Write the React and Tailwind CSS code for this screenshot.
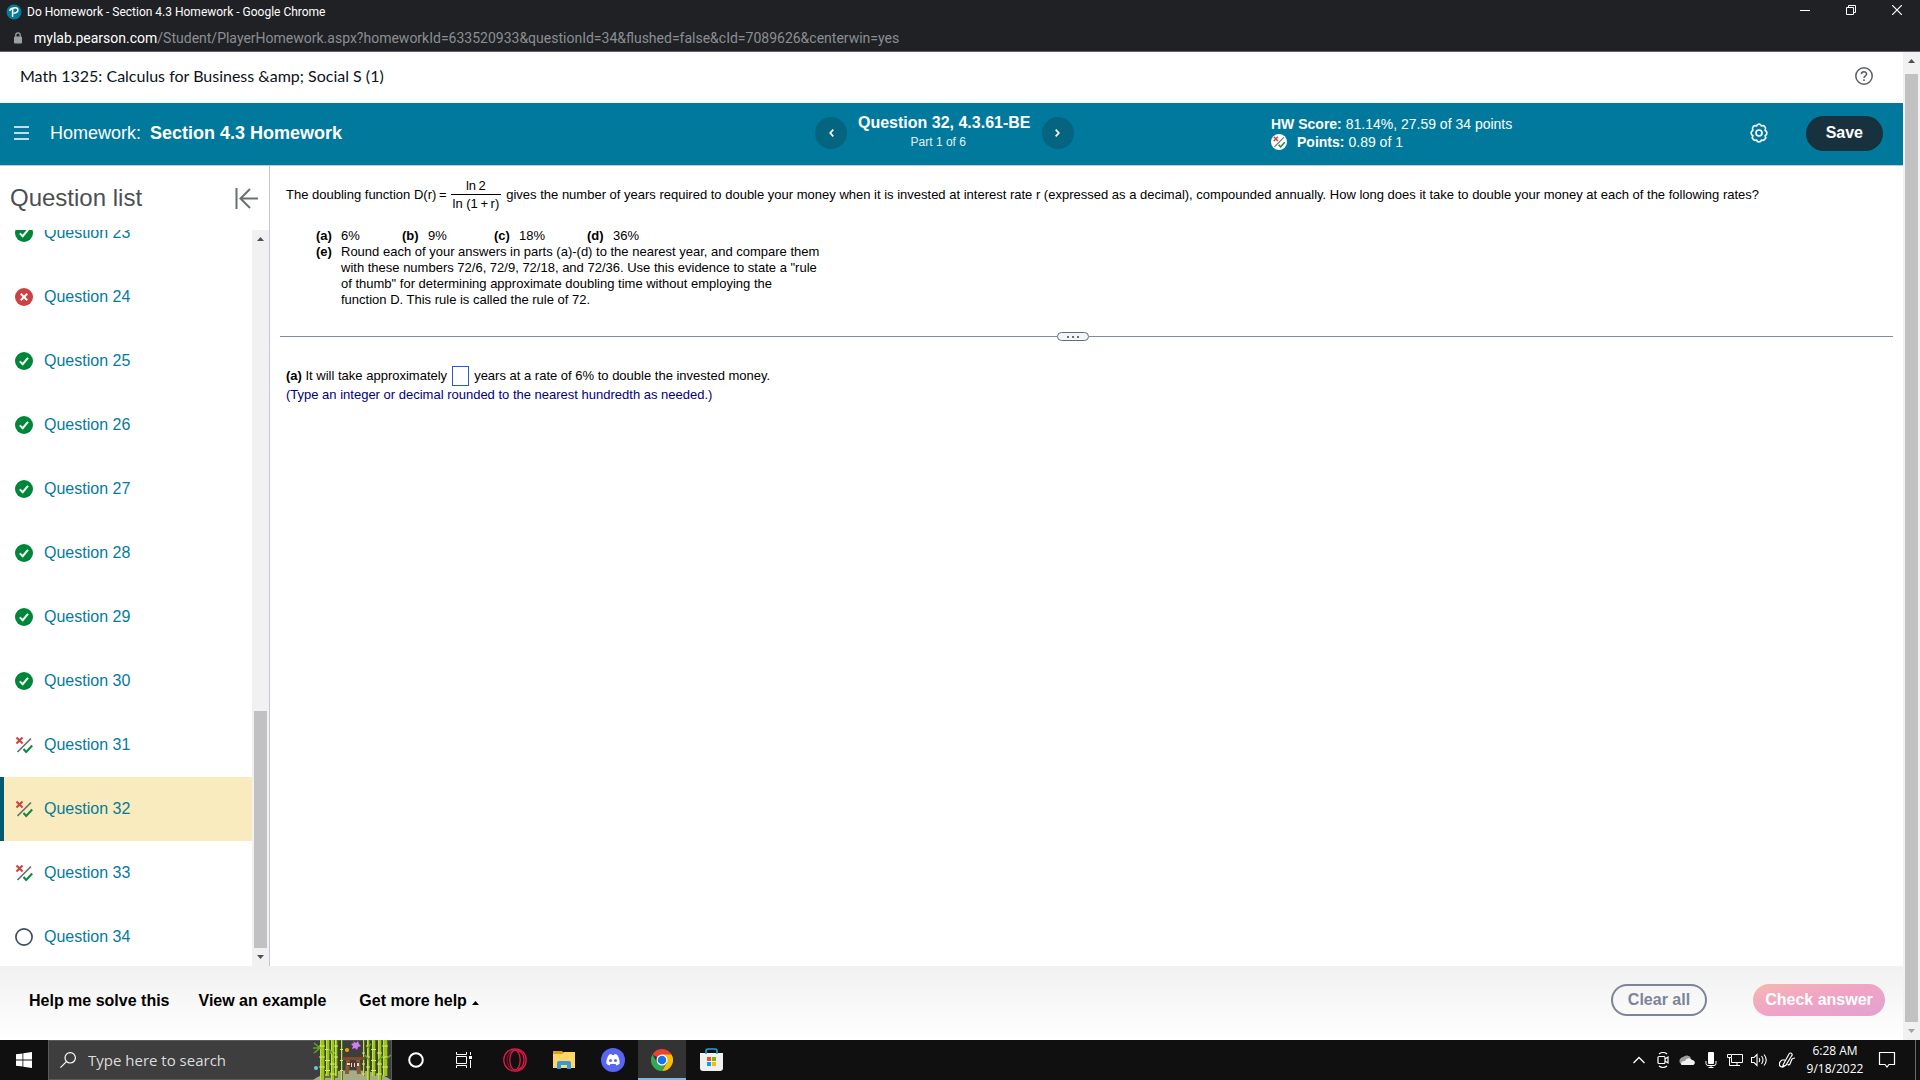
// src/App.jsx
import React, { useState } from 'react';

const questions = [
  { id: 23, status: 'correct' },
  { id: 24, status: 'wrong' },
  { id: 25, status: 'correct' },
  { id: 26, status: 'correct' },
  { id: 27, status: 'correct' },
  { id: 28, status: 'correct' },
  { id: 29, status: 'correct' },
  { id: 30, status: 'correct' },
  { id: 31, status: 'partial' },
  { id: 32, status: 'partial' },
  { id: 33, status: 'partial' },
  { id: 34, status: 'empty' },
];

function StatusIcon({ status }) {
  if (status === 'correct') {
    return (
      <svg className="size-[18px]" viewBox="0 0 18 18" fill="none">
        <circle cx="9" cy="9" r="9" fill="#008638" />
        <path d="M4.8 9.4l2.9 2.8 5.3-6.4" stroke="#fff" strokeWidth="2" />
      </svg>
    );
  }
  if (status === 'wrong') {
    return (
      <svg className="size-[18px]" viewBox="0 0 18 18" fill="none">
        <circle cx="9" cy="9" r="9" fill="#cc4142" />
        <path d="M5.8 5.8l6.4 6.4M12.2 5.8l-6.4 6.4" stroke="#fff" strokeWidth="2" />
      </svg>
    );
  }
  if (status === 'partial') {
    return (
      <svg className="size-[18px]" viewBox="0 0 18 18" fill="none">
        <path d="M1.5 1.5l6 6M7.5 1.5l-6 6" stroke="#cc4142" strokeWidth="2" />
        <path d="M2.5 16L16 2.5" stroke="#6a7070" strokeWidth="1.7" />
        <path d="M8.5 13l2.7 3 6-6.5" stroke="#12893f" strokeWidth="2.1" />
      </svg>
    );
  }
  return (
    <svg className="size-[18px]" viewBox="0 0 18 18" fill="none">
      <circle cx="9" cy="9" r="8.1" stroke="#3d4d61" strokeWidth="1.7" />
    </svg>
  );
}

function Arrow({ up, className }) {
  return (
    <svg className={className} viewBox="0 0 7 4" fill="currentColor">
      <path d={up ? 'M0 4L3.5 0 7 4z' : 'M0 0h7L3.5 4z'} />
    </svg>
  );
}

/* ---------- Browser window ---------- */

function TitleBar() {
  return (
    <div className="bg-[#202124] text-white font-['Roboto','Noto_Sans',sans-serif]">
      <div className="flex h-6 items-center pl-[6px] text-xs">
        <svg className="size-4" viewBox="0 0 16 16" fill="none">
          <circle cx="8" cy="8" r="7.5" fill="#047a9c" />
          <path d="M6.6 13V4.3c3.5-1.3 5.4-.2 5.3 1.8-.1 2-2 3.2-4.3 2.9M3.6 6.8c.2-1.3 1.3-2.3 3-2.8" stroke="#fff" strokeWidth="1.5" />
        </svg>
        <span className="ml-[5px]">Do Homework - Section 4.3 Homework - Google Chrome</span>
        <div className="ml-auto flex">
          <button aria-label="Minimize" className="flex h-6 w-[46px] items-center justify-center">
            <svg className="size-[10px]" viewBox="0 0 10 10" stroke="#fff"><path d="M0 3.5h10" /></svg>
          </button>
          <button aria-label="Restore" className="flex h-6 w-[46px] items-center justify-center pb-1">
            <svg className="size-[10px]" viewBox="0 0 10 10" stroke="#fff" fill="none">
              <path d="M.5 2.5h7v7h-7zM2.5 2.5v-2h7v7h-2" />
            </svg>
          </button>
          <button aria-label="Close" className="flex h-6 w-[46px] items-center justify-center pb-1">
            <svg className="size-[10px]" viewBox="0 0 10 10" stroke="#fff" strokeWidth="1.2"><path d="M0 0l10 10M10 0L0 10" /></svg>
          </button>
        </div>
      </div>
      <div className="flex h-7 items-center border-b border-[#5f6368] pl-[14px] text-sm">
        <svg className="h-3 w-2" viewBox="0 0 8 12" fill="none">
          <path d="M1.8 5V3a2.2 2.2 0 0 1 4.4 0v2" stroke="#9aa0a6" strokeWidth="1.3" />
          <rect y="4.5" width="8" height="7" rx="1" fill="#9aa0a6" />
        </svg>
        <span className="ml-3 whitespace-nowrap text-[#8b8f94]">
          <span className="text-white">mylab.pearson.com</span>
          /Student/PlayerHomework.aspx?homeworkId=633520933&amp;questionId=34&amp;flushed=false&amp;cId=7089626&amp;centerwin=yes
        </span>
      </div>
    </div>
  );
}

function CourseHeader() {
  return (
    <div className="flex h-[51px] items-center justify-between bg-white pr-[30px] pb-[3px] pl-5">
      <span className="font-['Lato','Inter',sans-serif] text-base text-[#0b1220]">
        Math 1325: Calculus for Business {'&amp;'} Social S (1)
      </span>
      <button aria-label="Help">
        <svg className="size-[18px]" viewBox="0 0 18 18" fill="none" stroke="#5a5f61" strokeWidth="1.5">
          <circle cx="9" cy="9" r="8.2" />
          <path d="M6.4 7.2c0-3.2 5.2-3.1 5.2-.2 0 1.9-2.6 1.7-2.6 4M9 12.2v1.7" />
        </svg>
      </button>
    </div>
  );
}

function HomeworkHeader() {
  return (
    <header className="grid h-[63px] grid-cols-[815fr_456fr_632fr] items-center border-b border-[#c7c7d3] bg-[#00799c] pb-[2px] text-white">
      <div className="flex items-center pl-[14px]">
        <button aria-label="Menu">
          <svg className="h-[14px] w-[15px]" viewBox="0 0 15 14" stroke="#fff" strokeWidth="1.4">
            <path d="M0 1h15M0 7h15M0 13h15" />
          </svg>
        </button>
        <h1 className="ml-[21px] text-lg">
          Homework: <b className="ml-1">Section 4.3 Homework</b>
        </h1>
      </div>

      <div className="flex items-center">
        <button aria-label="Previous question" className="flex size-8 items-center justify-center rounded-full bg-[#05647f]">
          <svg className="h-2 w-[5px]" viewBox="0 0 5 8" fill="none" stroke="#fff" strokeWidth="1.7"><path d="M4.3.7L1.2 4l3.1 3.3" /></svg>
        </button>
        <div className="mx-[11px] pb-[2px] text-center">
          <h2 className="text-base leading-5 font-bold">Question 32, 4.3.61-BE</h2>
          <p className="pr-3 text-xs leading-[18px] text-[#e3f0f4]">Part 1 of 6</p>
        </div>
        <button aria-label="Next question" className="flex size-8 items-center justify-center rounded-full bg-[#05647f]">
          <svg className="h-2 w-[5px]" viewBox="0 0 5 8" fill="none" stroke="#fff" strokeWidth="1.7"><path d="M.7.7L3.8 4 .7 7.3" /></svg>
        </button>
      </div>

      <div className="flex items-center pr-5">
        <div className="text-sm leading-[18px]">
          <p><b>HW Score:</b> 81.14%, 27.59 of 34 points</p>
          <p className="flex items-center">
            <span className="mr-[10px] flex size-4 items-center justify-center rounded-full bg-white">
              <span className="scale-70"><StatusIcon status="partial" /></span>
            </span>
            <b className="mr-1">Points:</b> 0.89 of 1
          </p>
        </div>
        <button aria-label="Settings" className="ml-auto">
          <svg className="size-5" viewBox="0 0 18 18" fill="none" stroke="#fff" strokeWidth="1.5" strokeLinejoin="round">
            <path d="M9 1c1.3 0 1.9.5 2.2 1.7 1.2-.5 2.3-.3 3.1.7.9 1 .9 2.1.2 3.1 1.1.6 1.600 1.400 1.600 2.500s-.5 1.900-1.600 2.500c.7 1 .7 2.100-.2 3.100-.8 1-1.900 1.200-3.100.7C10.900 16.500 10.300 17 9 17s-1.900-.5-2.200-1.700c-1.200.5-2.300.3-3.100-.7-.9-1-.9-2.100-.2-3.100C2.400 10.900 1.900 10.100 1.900 9s.5-1.900 1.600-2.500c-.7-1-.7-2.100.2-3.100.8-1 1.900-1.200 3.100-.7C7.100 1.500 7.700 1 9 1z" />
            <circle cx="9" cy="9" r="2.7" />
          </svg>
        </button>
        <button className="ml-[37px] h-[35px] rounded-full bg-[#17313f] px-5 text-base font-bold">Save</button>
      </div>
    </header>
  );
}

/* ---------- Question list ---------- */

function QuestionList({ current, onSelect }) {
  return (
    <aside className="flex w-[270px] shrink-0 flex-col border-r border-[#c7c7d3]">
      <div className="flex h-16 shrink-0 items-center justify-between pr-[11px] pl-[10px]">
        <h2 className="text-2xl text-[#4b4f52]">Question list</h2>
        <button aria-label="Collapse question list">
          <svg className="h-[21px] w-[23px]" viewBox="0 0 23 21" fill="none" stroke="#6a7070" strokeWidth="2">
            <path d="M1.5 0v21M6 10.5h17M15 1L5.5 10.5 15 20" />
          </svg>
        </button>
      </div>
      <div className="flex min-h-0 flex-1">
        <div className="flex-1 overflow-hidden">
          <ul className="-mt-[29px]">
            {questions.map((q) => (
              <li key={q.id}>
                <a
                  href={`#q${q.id}`}
                  onClick={() => onSelect(q.id)}
                  className={`flex h-16 items-center gap-[11px] border-l-4 pl-[11px] text-base text-[#047a9c] ${q.id === current ? 'border-[#005a70] bg-[#f9ebbd]' : 'border-transparent'}`}
                >
                  <StatusIcon status={q.status} />
                  Question {q.id}
                </a>
              </li>
            ))}
          </ul>
        </div>
        <div className="flex w-[17px] flex-col items-center bg-[#f1f1f1] py-[7px] text-[#505050]">
          <Arrow up className="h-1 w-[7px]" />
          <div className="flex-1" />
          <div className="h-[237px] w-[13px] bg-[#c1c1c1]" />
          <Arrow className="mt-[7px] h-1 w-[7px]" />
        </div>
      </div>
    </aside>
  );
}

/* ---------- Question body ---------- */

function QuestionBody() {
  const [answer, setAnswer] = useState('');

  return (
    <main className="min-w-0 flex-1 px-[10px] text-[13px] leading-4 text-black">
      <div className="flex items-center pt-3 pl-[6px] whitespace-nowrap">
        <span>The doubling function D(r)&thinsp;=</span>
        <span className="mr-[5px] ml-1 inline-flex flex-col text-center">
          <span className="border-b border-black px-[2px]">ln&thinsp;2</span>
          <span className="px-[2px] pt-px">ln (1&thinsp;+&thinsp;r)</span>
        </span>
        <span>
          gives the number of years required to double your money when it is invested at interest rate r (expressed as a decimal), compounded annually. How long does it take to double your money at each of the following rates?
        </span>
      </div>

      <div className="mt-4 pl-9">
        <div className="grid grid-cols-[25px_61px_26px_66px_25px_68px_26px_auto]">
          <b>(a)</b><span>6%</span>
          <b>(b)</b><span>9%</span>
          <b>(c)</b><span>18%</span>
          <b>(d)</b><span>36%</span>
        </div>
        <div className="flex">
          <b className="w-[25px]">(e)</b>
          <p>
            Round each of your answers in parts (a)-(d) to the nearest year, and compare them<br />
            with these numbers 72/6, 72/9, 72/18, and 72/36. Use this evidence to state a "rule<br />
            of thumb" for determining approximate doubling time without employing the<br />
            function D. This rule is called the rule of 72.
          </p>
        </div>
      </div>

      <div className="mt-6 flex items-center">
        <div className="h-px flex-[29] bg-[#8088a3]" />
        <button aria-label="Resize panels" className="flex h-[9px] w-8 items-center justify-center gap-[3px] rounded-full border border-[#5b6f8a] bg-[#f5f5f5]">
          <i className="size-[2px] bg-[#6a7070]" />
          <i className="size-[2px] bg-[#6a7070]" />
          <i className="size-[2px] bg-[#6a7070]" />
        </button>
        <div className="h-px flex-[30] bg-[#8088a3]" />
      </div>

      <div className="mt-[25px] pl-[6px]">
        <label className="flex items-center">
          <span><b>(a)</b> It will take approximately</span>
          <input
            type="text"
            className="mx-[5px] h-5 w-[17px] border border-[#2a5bd0] bg-white outline-none"
            value={answer}
            onChange={(e) => setAnswer(e.target.value)}
          />
          <span>years at a rate of 6% to double the invested money.</span>
        </label>
        <p className="mt-px text-[#000080]">(Type an integer or decimal rounded to the nearest hundredth as needed.)</p>
      </div>
    </main>
  );
}

function HelpBar() {
  return (
    <footer className="flex h-[74px] shrink-0 items-center bg-linear-to-b from-[#f1f1f1] to-white pr-[18px] pb-[6px] pl-[29px] text-base font-bold text-black">
      <button className="pt-px">Help me solve this</button>
      <button className="ml-[29px] pt-px">View an example</button>
      <button className="ml-[33px] flex items-center gap-[5px] pt-px">
        Get more help <Arrow up className="mt-1 h-1 w-[7px]" />
      </button>
      <button className="ml-auto h-8 w-24 rounded-full border-2 border-[#7d8499] text-[#7d8499]">Clear all</button>
      <button className="ml-[46px] h-8 w-33 rounded-full bg-linear-to-br from-[#f5b8b0] via-[#efa3c6] to-[#e3a2d0] text-white">Check answer</button>
    </footer>
  );
}

/* ---------- Windows taskbar ---------- */

const stalks = [
  { x: 7, w: 4 }, { x: 13, w: 3 }, { x: 18, w: 3 }, { x: 22, w: 2 }, { x: 28, w: 1 },
  { x: 50, w: 1 }, { x: 54, w: 2 }, { x: 59, w: 3 }, { x: 65, w: 3 }, { x: 70, w: 4 },
];

function Bamboo() {
  return (
    <svg className="h-10 w-[78px]" viewBox="0 0 78 40">
      <path d="M0 40c16-13 62-13 78 0z" fill="#a5ac86" />
      <path d="M12 36c4-4 10-5 13-4v6H12z" fill="#26331c" opacity=".5" />
      {stalks.map((s, i) => (
        <g key={s.x}>
          <rect x={s.x + 1} width={s.w} height={i % 2 ? 36 : 40} fill="#4d7a17" />
          <rect x={s.x} width={s.w} height={i % 2 ? 36 : 40} fill="#9cc41c" />
          <rect x={s.x} width="1" height={i % 2 ? 36 : 40} fill="#c6df3c" />
          <path d={`M${s.x - 1} ${6 + (i % 3) * 3.5}h${s.w + 2}m-${s.w + 2} 11h${s.w + 2}m-${s.w + 2} 10h${s.w + 2}`} stroke="#dde77a" />
        </g>
      ))}
      <path d="M1 3l6 5-6 5M0 8h7M78 15l-5 4M16 9l4 5M52 15l4 5M58 4l-4 4M65 21l5-5" stroke="#62a51c" strokeWidth="1.5" fill="none" />
      <path d="M29 17h23l-1 3H30z" fill="#7b4b2d" />
      <path d="M33 20l-1 14h4l1-14zM43 20l1 14h4l-1-14z" fill="#8b5936" />
      <path d="M35 22h11v4H35z" fill="#5b3825" />
      <path d="M34 23h3v2h-3zm4 0h1v4h-1zm3 0h1v4h-1zm3 0h2v3h-2z" fill="#ead9bb" />
      <circle cx="34" cy="10" r="2" fill="#f7a600" />
      <circle cx="3" cy="28" r="2" fill="#65cbed" />
      <path d="M40 1l3 2 2-2 1 3 2 2-3 1-1 3-2-2-3 1 1-3-2-2 3-1z" fill="#d77cf5" />
    </svg>
  );
}

function AppButton({ label, active, children }) {
  return (
    <button
      aria-label={label}
      className={`flex h-10 w-12 items-center justify-center ${active ? 'border-b-2 border-[#76b9ed] bg-[#333333] pt-[2px]' : ''}`}
    >
      {children}
    </button>
  );
}

function Taskbar() {
  return (
    <div className="flex h-10 shrink-0 items-center bg-[#101010] text-white font-['Open_Sans','Noto_Sans',sans-serif]">
      <AppButton label="Start">
        <svg className="size-4" viewBox="0 0 16 16" fill="#fff">
          <path d="M0 2.3L6.5 1.4v6.2H0zM7.3 1.3L16 0v7.6H7.3zM0 8.4h6.5v6.2L0 13.7zM7.3 8.4H16V16l-8.7-1.3z" />
        </svg>
      </AppButton>
      <div className="flex h-10 w-[344px] items-center border border-[#5a5a5a] bg-[#3e3e3e] pl-[11px]">
        <svg className="size-4 shrink-0" viewBox="0 0 16 16" fill="none" stroke="#fff" strokeWidth="1.2">
          <circle cx="10.2" cy="5.8" r="5.2" /><path d="M6.4 9.6L.4 15.6" />
        </svg>
        <input
          type="text"
          aria-label="Type here to search"
          placeholder="Type here to search"
          className="ml-3 min-w-0 flex-1 bg-transparent text-[15px] outline-none placeholder:text-[#dcdcdc]"
        />
        <Bamboo />
      </div>
      <AppButton label="Cortana">
        <svg className="size-4" viewBox="0 0 16 16" fill="none"><circle cx="8" cy="8" r="6.8" stroke="#fff" strokeWidth="2" /></svg>
      </AppButton>
      <AppButton label="Task view">
        <svg className="size-4" viewBox="0 0 16 16" fill="none" stroke="#fff">
          <path d="M.5 0v2.5h10V0M.5 16v-2.5h10V16M.5 4.5h10v7H.5zM14.5 0v3M14.5 8v8" />
          <path d="M13 4h3v3h-3z" fill="#fff" stroke="none" />
        </svg>
      </AppButton>
      <div className="ml-[3px] flex gap-px">
        <AppButton label="Opera GX">
          <svg className="size-6" viewBox="0 0 24 24" fill="none" stroke="#e3194b" strokeWidth="1.3">
            <circle cx="12" cy="12" r="11.2" />
            <ellipse cx="12" cy="12" rx="5.2" ry="10" />
            <path d="M15 2.3c8 3.5 8 16 0 19.4" />
            <path d="M9 2.3c-3 3.5-5 5-5 9.7s2 6.5 5 9.7" opacity=".5" />
          </svg>
        </AppButton>
        <AppButton label="File Explorer">
          <svg className="h-[18px] w-[22px]" viewBox="0 0 22 18">
            <path d="M0 0h9l2 2h10v4H0z" fill="#e3a008" />
            <path d="M0 3h9l2-2h11v16H0z" fill="#ffd766" />
            <path d="M4 18v-6q0-2 2-2h10q2 0 2 2v6h-4v-4H8v4z" fill="#3a96dd" />
          </svg>
        </AppButton>
        <AppButton label="Discord">
          <svg className="size-6" viewBox="0 0 24 24">
            <circle cx="12" cy="12" r="12" fill="#5865f2" />
            <path d="M8 6.8c1-.5 2-.7 2.500-.7l.4.8h2.200l.4-.8c.7 0 1.700.3 2.600.7 1.900 2.700 2.700 5.500 2.500 9-1 .8-2 1.300-3.200 1.600l-.8-1.300H9.400l-.8 1.300c-1.200-.3-2.200-.8-3.200-1.600-.2-3.400.6-6.300 2.600-9z" fill="#fff" />
            <circle cx="9.5" cy="12.5" r="1.5" fill="#5865f2" />
            <circle cx="14.5" cy="12.5" r="1.5" fill="#5865f2" />
          </svg>
        </AppButton>
        <AppButton label="Google Chrome" active>
          <svg className="size-[22px]" viewBox="0 0 22 22">
            <path d="M11 11L1.47 5.5A11 11 0 0 1 20.53 5.5z" fill="#ea4335" />
            <path d="M11 5.5h9.53A11 11 0 0 1 11 22l4.76-8.25z" fill="#fbbc04" />
            <path d="M15.76 13.75L11 22A11 11 0 0 1 1.47 5.5l4.77 8.25z" fill="#34a853" />
            <circle cx="11" cy="11" r="5.5" fill="#fff" />
            <circle cx="11" cy="11" r="4.3" fill="#1a73e8" />
          </svg>
        </AppButton>
        <AppButton label="Microsoft Store">
          <svg className="h-6 w-[23px]" viewBox="0 0 23 24" fill="none">
            <path d="M0 5h23v15q0 3-3 3H3q-3 0-3-3z" fill="#f0f0f0" />
            <path d="M6 6V3q0-2 2-2h7q2 0 2 2v3" stroke="#1fa3e0" strokeWidth="1.6" />
            <path d="M7 9h4v4H7z" fill="#f25022" /><path d="M12 9h4v4h-4z" fill="#7fba00" />
            <path d="M7 14h4v4H7z" fill="#00a4ef" /><path d="M12 14h4v4h-4z" fill="#ffb900" />
          </svg>
        </AppButton>
      </div>

      <div className="ml-auto flex items-center gap-2">
        <svg className="size-4" viewBox="0 0 16 16" fill="none" stroke="#fff" strokeWidth="1.3"><path d="M2.5 11L8 5.5l5.5 5.5" /></svg>
        <svg className="size-4" viewBox="0 0 16 16" fill="none" stroke="#fff" strokeWidth="1.2">
          <rect x="3" y="4.5" width="7" height="7" rx="1" /><path d="M10 7l3-2v6l-3-2M4 2q4-3 8 0M4 14q4 3 8 0" />
        </svg>
        <svg className="size-4" viewBox="0 0 16 16">
          <path d="M1 11a4 4 0 0 1 3-6 5 5 0 0 1 8 1l-8 7H3z" fill="#9c9c9c" />
          <path d="M2 12.5C2 9 5 9 6 9c1-3 5-4 7-1 3 0 4 4 1 5H3z" fill="#f2f2f2" />
        </svg>
        <svg className="size-4" viewBox="0 0 16 16" fill="none" stroke="#fff">
          <rect x="5" width="6" height="12" rx="1" fill="#fff" stroke="none" />
          <path d="M3 9v2.5q0 2 2 2h6q2 0 2-2V9M8 13.5V16M5.5 15.5h5" />
        </svg>
        <svg className="size-4" viewBox="0 0 16 16" fill="none" stroke="#fff">
          <path d="M5 2.5h10.500v8H4.500V6M10 10.500v3M6 13.500h7M.5 2.500h4v3h-4zM2.500 5.500v8H6" />
        </svg>
        <svg className="size-4" viewBox="0 0 16 16" fill="none" stroke="#fff" strokeWidth="1.1">
          <path d="M.5 5.5H3l3-3v11l-3-3H.5zM8 6q1.500 2 0 4M10.500 4q3 4 0 8M13 2.500q4.500 5.500 0 11" />
        </svg>
        <svg className="ml-1 size-4" viewBox="0 0 16 16" fill="none" stroke="#fff" strokeWidth="1.2">
          <path d="M4 13L10 2q1.500-2 3 0 .5 1-.5 2L7 13l-3 2zM6 8H3q-4 3-2 6 2 2 4-1M9 12q0 2 2 0l2-5q2-1 3-1" />
        </svg>
        <div className="ml-[2px] w-[60px] text-center text-xs leading-[18px]">
          <div>6:28 AM</div>
          <div>9/18/2022</div>
        </div>
        <button aria-label="Notifications" className="mr-[11px] ml-[5px]">
          <svg className="size-[18px]" viewBox="0 0 18 18" fill="none" stroke="#fff" strokeWidth="1.2">
            <path d="M1.500 1.500h15v12H11L9 16l-2-2.500H1.500z" />
          </svg>
        </button>
        <div className="mr-1 h-10 w-px bg-[#6a6a6a]" />
      </div>
    </div>
  );
}

export default function App() {
  const [current, setCurrent] = useState(32);

  return (
    <div className="flex h-screen flex-col overflow-hidden bg-white font-['Liberation_Sans',Arial,sans-serif]">
      <TitleBar />
      <div className="flex min-h-0 flex-1">
        <div className="flex min-w-0 flex-1 flex-col">
          <CourseHeader />
          <HomeworkHeader />
          <div className="flex min-h-0 flex-1">
            <QuestionList current={current} onSelect={setCurrent} />
            <QuestionBody />
          </div>
          <HelpBar />
        </div>
        {/* page scrollbar */}
        <div className="flex w-[17px] flex-col items-center bg-[#f1f1f1] py-[7px] text-[#505050]">
          <Arrow up className="h-1 w-[7px]" />
          <div className="mt-[11px] mb-[7px] w-[13px] flex-1 bg-[#c1c1c1]" />
          <Arrow className="h-1 w-[7px] text-[#a3a3a3]" />
        </div>
      </div>
      <Taskbar />
    </div>
  );
}
